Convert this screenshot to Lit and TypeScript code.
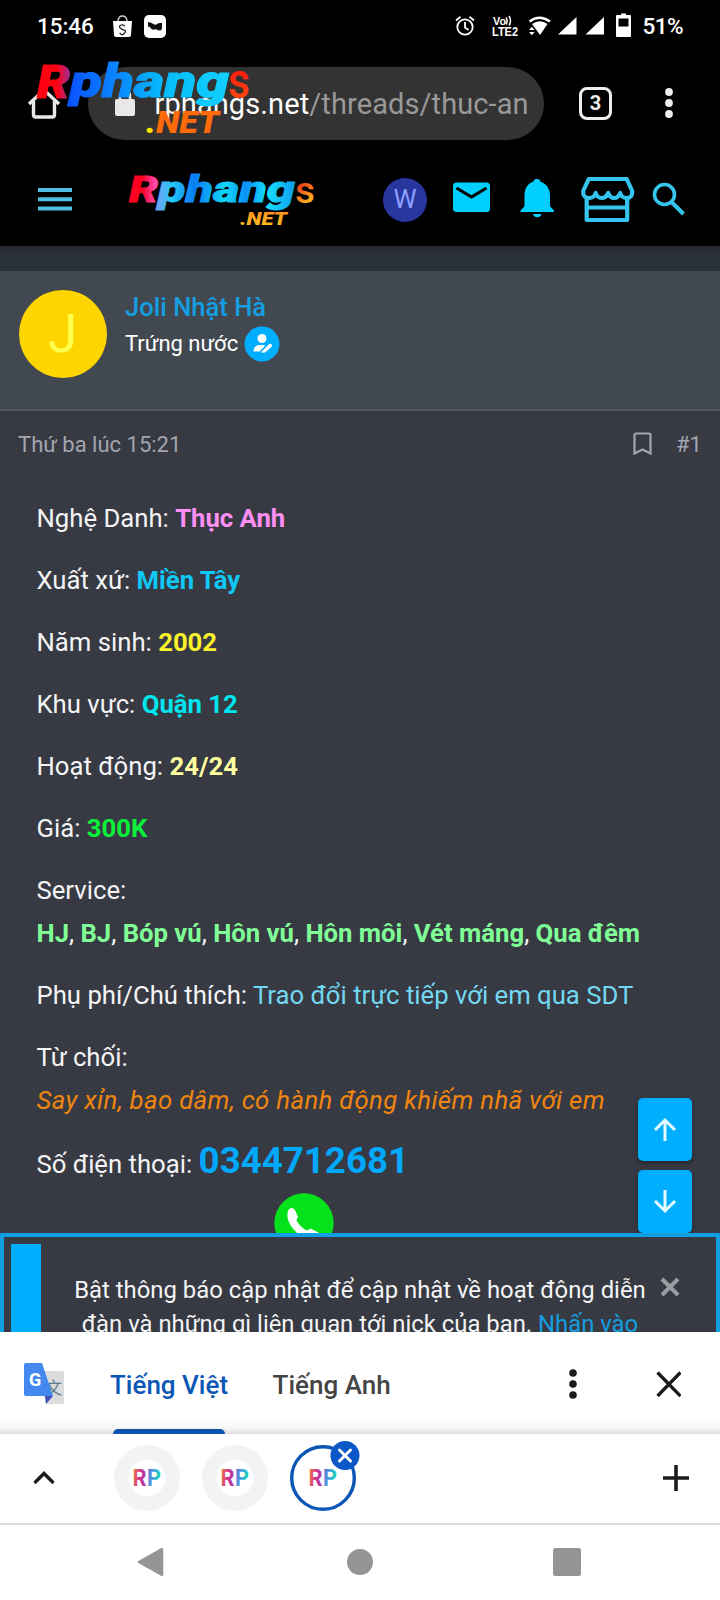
import { LitElement, html, css, svg } from "lit";
import { customElement, property } from "lit/decorators.js";

const fields = [
  { label: "Nghệ Danh:", value: "Thục Anh", tone: "pink" },
  { label: "Xuất xứ:", value: "Miền Tây", tone: "sky" },
  { label: "Năm sinh:", value: "2002", tone: "yellow" },
  { label: "Khu vực:", value: "Quận 12", tone: "cyan" },
  { label: "Hoạt động:", value: "24/24", tone: "cream" },
  { label: "Giá:", value: "300K", tone: "green" },
];
const services = ["HJ", "BJ", "Bóp vú", "Hôn vú", "Hôn môi", "Vét máng", "Qua đêm"];

@customElement("site-logo")
export class SiteLogo extends LitElement {
  @property() variant = "header";
  static styles = css`
    :host { display: block; }
    svg { display: block; overflow: visible; }
    .heavy { font: italic 900 47px Roboto, sans-serif; stroke-width: 1px; }
    .thin { font: 500 50px Roboto, sans-serif; }
    .net { font: italic 900 31px Roboto, sans-serif; }
    .heavy-s { font: italic 900 36px Roboto, sans-serif; stroke-width: 0.8px; }
    .thin-s { font: 500 37px Roboto, sans-serif; }
    .net-s { font: italic 900 17.5px Roboto, sans-serif; }
  `;
  render() {
    if (this.variant === "large") {
      return html`<svg width="216" height="76" viewBox="36 60 216 76">
        <defs>
          <linearGradient id="r"><stop offset=".6" stop-color="#ff0010" /><stop offset="1" stop-color="#9c2f9c" /></linearGradient>
          <linearGradient id="p"><stop offset="0" stop-color="#0a50ff" /><stop offset=".3" stop-color="#0a86ff" /><stop offset=".6" stop-color="#06bdfa" /><stop offset="1" stop-color="#12d0ff" /></linearGradient>
          <linearGradient id="s" x2="0" y2="1"><stop offset="0.3" stop-color="#ff1a10" /><stop offset="1" stop-color="#ff5a10" /></linearGradient>
        </defs>
        <text class="heavy" x="37" y="97.500" textLength="33" lengthAdjust="spacingAndGlyphs" fill="url(#r)" stroke="url(#r)">R</text>
        <text class="heavy" x="70" y="97" textLength="159" lengthAdjust="spacingAndGlyphs" fill="url(#p)" stroke="url(#p)">phang</text>
        <text class="thin" x="228" y="98" textLength="22" lengthAdjust="spacingAndGlyphs" fill="url(#s)">s</text>
        <text class="net" x="146" y="133" textLength="73" lengthAdjust="spacingAndGlyphs" fill="#ff6a0a"><tspan fill="#ffe600">.</tspan>NET</text>
      </svg>`;
    }
    return html`<svg width="188" height="54" viewBox="128 173 188 54">
      <defs>
        <linearGradient id="r"><stop offset=".45" stop-color="#ff0020" /><stop offset="1" stop-color="#ff5ad0" /></linearGradient>
        <linearGradient id="p"><stop offset="0" stop-color="#7a9cf0" /><stop offset=".12" stop-color="#25c8f8" /><stop offset=".28" stop-color="#0a7cf5" /><stop offset=".5" stop-color="#10d8f8" /><stop offset=".65" stop-color="#0a90fa" /><stop offset=".8" stop-color="#14e0fa" /><stop offset="1" stop-color="#109cf0" /></linearGradient>
        <linearGradient id="s" x2="0.4" y2="1"><stop offset="0.35" stop-color="#f03018" /><stop offset=".9" stop-color="#ffb020" /></linearGradient>
        <linearGradient id="n" x2="0" y2="1"><stop offset="0" stop-color="#ff8a18" /><stop offset="1" stop-color="#ffc628" /></linearGradient>
      </defs>
      <text class="heavy-s" x="129" y="202" textLength="29" lengthAdjust="spacingAndGlyphs" fill="url(#r)" stroke="url(#r)">R</text>
      <text class="heavy-s" x="158" y="201.500" textLength="137" lengthAdjust="spacingAndGlyphs" fill="url(#p)" stroke="url(#p)">phang</text>
      <text class="thin-s" x="295" y="202.500" textLength="20" lengthAdjust="spacingAndGlyphs" fill="url(#s)">s</text>
      <text class="net-s" x="240" y="225" textLength="47" lengthAdjust="spacingAndGlyphs" fill="url(#n)">.NET</text>
    </svg>`;
  }
}

@customElement("tab-chip")
export class TabChip extends LitElement {
  @property({ type: Boolean }) active = false;
  static styles = css`
    :host { display: block; width: 66px; height: 66px; }
    svg { display: block; overflow: visible; }
    .rp { font: 700 23.5px Roboto, sans-serif; }
  `;
  render() {
    return html`<svg width="66" height="66" viewBox="0 0 66 66">
      <defs>
        <linearGradient id="a" y2=".3"><stop offset=".1" stop-color="#f08048" /><stop offset=".6" stop-color="#d43090" /><stop offset="1" stop-color="#a838a8" /></linearGradient>
        <linearGradient id="b" y2=".3"><stop offset=".1" stop-color="#6a6ad8" /><stop offset=".5" stop-color="#4aa0e0" /><stop offset="1" stop-color="#10d8b0" /></linearGradient>
      </defs>
      ${this.active
        ? svg`<circle cx="33" cy="33" r="31.300" fill="#fff" stroke="#0b57b5" stroke-width="3.400" />`
        : svg`<circle cx="33" cy="33" r="33" fill="#f1f3f5" /><circle cx="33" cy="33" r="18.500" fill="#fff" />`}
      <text class="rp" x="18.500" y="41" textLength="14" lengthAdjust="spacingAndGlyphs" fill="url(#a)">R</text>
      <text class="rp" x="33" y="41" textLength="14" lengthAdjust="spacingAndGlyphs" fill="url(#b)">P</text>
      ${this.active
        ? svg`<circle cx="55" cy="10.500" r="14.500" fill="#0b57c8" /><path d="M49.500 5l11 11M60.500 5l-11 11" stroke="#fff" stroke-width="3" stroke-linecap="round" />`
        : null}
    </svg>`;
  }
}

@customElement("app-root")
export class AppRoot extends LitElement {
  static styles = css`
    :host { display: block; width: 720px; height: 1600px; overflow: hidden; position: relative; background: #000; color: #f4f4f6; font-family: Roboto, "Noto Sans", sans-serif; }
    * { box-sizing: border-box; }
    svg { display: block; flex: none; }
    .row { display: flex; align-items: center; white-space: nowrap; }
    .push { margin-left: auto; }

    .status { height: 52px; padding: 0 37px 0 37px; font-size: 22.400px; font-weight: 500; color: #fff; }
    .time { width: 76px; }
    .icons-left { gap: 12px; }

    .chrome { height: 102px; padding: 0 47px 0 27px; }
    .url { width: 456px; height: 73px; margin-left: 27px; border-radius: 37px; background: #333; padding-left: 27px; font-size: 29px; color: #fff; }
    .url .text { margin: 2px 0 0 19.5px; letter-spacing: 0.1px; }
    .url .path { color: #999; }
    .count { width: 33px; height: 33px; border: 3.5px solid #eee; border-radius: 8px; display: grid; place-items: center; font-size: 20px; font-weight: 700; color: #eee; margin-left: 35px; }
    .overlay-logo { position: absolute; left: 36px; top: 60px; z-index: 2; }

    .site { height: 92px; padding: 0 34px 0 38px; }
    .site-logo { margin: 0 0 0 56px; }
    .w { width: 44px; height: 44px; border-radius: 50%; background: #28379d; color: #8c9eff; display: grid; place-items: center; font-size: 26px; margin: 0 26px 0 67px; padding-bottom: 2px; }

    .gap { height: 25px; background: linear-gradient(#24272f, #2c323c 35%, #2c323c); }
    .user { height: 140px; background: #41484f; border-bottom: 2px solid #50545e; padding: 19px 18.5px; display: flex; align-items: flex-start; }
    .avatar { width: 88px; height: 88px; border-radius: 50%; background: #ffd500; color: #ffff4d; display: grid; place-items: center; font-size: 53px; }
    .who { margin-left: 18.5px; }
    .name { font-size: 25.600px; line-height: 35px; font-weight: 500; color: #159ee2; }
    .title { font-size: 22px; height: 36px; color: #fff; margin-top: 0.5px; }
    .title svg { margin-left: 5.5px; }

    .post { height: 822px; background: #373a43; overflow: hidden; position: relative; }
    .meta { height: 66px; padding: 0 18px; font-size: 22px; color: #a3a5af; }
    .meta svg { margin-right: 24px; }
    .body { padding: 19.5px 37px 0 36.5px; font-size: 25.700px; line-height: 43px; white-space: nowrap; }
    .body p { margin: 0 0 19px; }
    .body b, .body i { font-weight: 700; }
    .body i { font-weight: 400; color: #f0860f; letter-spacing: 0.37px; }
    .pink { color: #ff8ff5; }
    .sky { color: #10c8f5; }
    .yellow { color: #fbf22b; }
    .cyan { color: #00e5ee; }
    .cream { color: #ffffa0; }
    .green { color: #0cf03c; }
    .mint { color: #80ff96; }
    .pale { color: #72d8f2; }
    .body .phone { font-size: 36.700px; color: #00a8fc; }
    .body .last { height: 43px; margin: -2px 0 10px; }
    .call { margin-left: 236px; }
    .jump { position: absolute; right: 28.5px; top: 687px; display: grid; gap: 9px; }
    .jump div { width: 54px; height: 63px; border-radius: 5px; background: #00aeff; display: grid; place-items: center; box-shadow: 0 2px 4px rgba(0, 0, 0, 0.4); }

    .notice { height: 99px; overflow: hidden; background: #373a43; border: solid #0f9fe2; border-width: 4px 4px 0; padding: 7px 0 0 7px; display: flex; align-items: flex-start; }
    .bar { width: 30px; height: 99px; background: #00aeff; }
    .notice p { margin: 30px 0 0 33px; width: 572px; text-align: center; font-size: 23.850px; line-height: 33.500px; white-space: nowrap; }
    .notice a { color: #159ee2; }
    .notice svg { margin: 33px 0 0 13.5px; }

    .translate { height: 102px; background: linear-gradient(#fff 88px, #f8f8f8 95px, #dedede); position: relative; padding: 1px 39px 0 23px; font-size: 26px; font-weight: 500; color: #444; }
    .lang { margin: 2px 0 0 45px; }
    .lang + .lang { margin-left: 44.5px; }
    .lang.on { color: #0b57b5; }
    .under { position: absolute; left: 113px; bottom: 0; width: 112px; height: 5px; border-radius: 5px 5px 0 0; background: #0b52ae; }
    .gtext { font: 700 18px Roboto, sans-serif; }
    .wen { font: 400 17px "Noto Sans CJK SC", sans-serif; }

    .tabs { height: 91px; background: #fff; border-bottom: 2px solid #dcdcdc; padding: 0 31px 1px 33px; }
    .chips { display: flex; gap: 22px; margin-left: 58.5px; }
    .nav { height: 75px; background: #fff; padding: 0 0 2px 137px; }
    .nav svg + svg { margin-left: 183px; }
    .nav svg + svg + svg { margin-left: 180px; }
  `;

  render() {
    return html`
      <header class="row status">
        <span class="time">15:46</span>
        <div class="row icons-left">
          <svg width="19" height="22" viewBox="0 0 19 22"><path d="M0 6h19l-1 14q0 2-2 2H3q-2 0-2-2z" fill="#fff" /><path d="M5 6q.5-5 4.500-5T14 6" fill="none" stroke="#ccc" stroke-width="1.500" /><path d="M12 11q-2.500-2-4.500-.7t0 3 4 1.900-.2 3.200-4.600-.6" fill="none" stroke="#222" stroke-width="1.300" /></svg>
          <svg width="22" height="23" viewBox="0 0 22 23"><rect width="22" height="23" rx="5" fill="#fff" /><path d="M4 7q3.500.5 5.500 2t3.500 0 5-1v4.500q0 3-2 3t-3-.8-3-.2-3.500-1.500T4 12z" fill="#111" /></svg>
        </div>
        <svg class="push" width="228" height="30" viewBox="455 11 228 30" fill="#fff">
          <circle cx="465" cy="27" r="7.700" fill="none" stroke="#fff" stroke-width="1.800" /><path d="M465 22v5.500l3.500 2.500M456 20.500l4.500-3.700M474 20.500l-4.500-3.700" fill="none" stroke="#fff" stroke-width="1.800" />
          <g font-family="Liberation Sans, sans-serif" font-weight="700"><text x="493" y="25" font-size="11.500" textLength="13" lengthAdjust="spacingAndGlyphs">Vo</text><text x="492" y="35.500" font-size="12" textLength="26" lengthAdjust="spacingAndGlyphs">LTE2</text></g>
          <path d="M506 17.500q2.200 3.500 0 7M509 16q3 5 0 9.500" fill="none" stroke="#fff" stroke-width="1.500" />
          <path d="M529.500 21.500q10-7.500 20.500 0" fill="none" stroke="#fff" stroke-width="2.300" /><path d="M532 24q8-5.500 15.500 0L540 35z" /><path d="M529 30l2.800-3.200 2.800 3.200zM529 32l2.800 3.200 2.800-3.200z" />
          <path d="M558 34.500h18.500V17zM585.500 34.500H604V17z" />
          <path d="M621 13.500h5V15h4q1 0 1 1v20q0 1-1 1h-13q-1 0-1-1V16q0-1 1-1h4z" /><path d="M618.500 18.500h10v8h-10z" fill="#000" />
          <text x="642.500" y="34" font-family="Roboto, sans-serif" font-size="22.500" font-weight="500" textLength="41">51%</text>
        </svg>
      </header>

      <div class="row chrome">
        <svg width="34" height="32" viewBox="0 0 34 32"><path d="M2 17L17 3l15 14M6.500 14v13.500q0 2.500 2.500 2.500h16q2.500 0 2.500-2.500V14" fill="none" stroke="#e8e8e8" stroke-width="3.400" /></svg>
        <div class="row url">
          <svg width="20" height="28" viewBox="0 0 20 28"><rect y="10" width="20" height="17" rx="2" fill="#e8e8e8" /><path d="M5 11V7q0-5 5-5t5 5v4" fill="none" stroke="#e8e8e8" stroke-width="2.500" /></svg>
          <span class="text">rphangs.net<span class="path">/threads/thuc-an</span></span>
        </div>
        <div class="count">3</div>
        <svg class="push" width="8" height="32" viewBox="0 0 8 32" fill="#eee"><circle cx="4" cy="5" r="3.900" /><circle cx="4" cy="16" r="3.900" /><circle cx="4" cy="27" r="3.900" /></svg>
      </div>
      <site-logo class="overlay-logo" variant="large"></site-logo>

      <nav class="row site">
        <svg width="34" height="24" viewBox="0 0 34 24" fill="#4fbce2"><path d="M0 0h34v4H0zM0 9.300h34v4H0zM0 18.600h34v4H0z" /></svg>
        <site-logo class="site-logo"></site-logo>
        <div class="w">W</div>
        <svg width="233" height="48" viewBox="453 176 233 48" class="push" fill="#00cfff">
          <rect x="453" y="182.500" width="37" height="29.500" rx="3.500" /><path d="M456.500 188l15 9 15-9" fill="none" stroke="#000" stroke-width="3.200" />
          <path d="M537 179c3 0 3.300 2 3.500 2.700 6 1.800 9.500 7 9.500 14v10.500l4 4.300v1.500h-33.500v-1.500l4-4.300V195.500c0-7 3-12 9-14 .2-.7.500-2.500 3.500-2.500zM533 214h8.500q-1 3.200-4.200 3.200t-4.300-3.200z" />
          <g transform="translate(-1.300 0)" fill="none" stroke="#35c4ee" stroke-width="4.200" stroke-linejoin="round"><path d="M590 179h38l5.500 12q.5 7-5.500 7-5 0-6.500-5-2 5-6 5t-6-5q-2 5-6.500 5t-6-5q-1.500 5-6.500 5-6.500 0-6-7z" /><path d="M588 198v22h40.500v-22M588 207.500h40" /></g>
          <g fill="none" stroke="#35c4ee" stroke-width="3.600"><circle cx="664.500" cy="194.500" r="10" /><path d="M671.500 202l12 12" stroke-width="4" /></g>
        </svg>
      </nav>

      <div class="gap"></div>
      <section class="user">
        <div class="avatar">J</div>
        <div class="who">
          <div class="name">Joli Nhật Hà</div>
          <div class="row title">Trứng nước
            <svg width="36" height="36" viewBox="0 0 36 36"><circle cx="18" cy="18" r="17.500" fill="#00aeff" /><g fill="#fff"><circle cx="18" cy="12.500" r="4.500" /><path d="M9.500 25.500c0-4 2.500-6.500 6-6.500h4l1.800.7-5.800 5.800zM17.500 25.800l7.500-7.500q1.500-1 2.600.2 1 1.200 0 2.300L21 26.500l-3.500.3z" /></g></svg>
          </div>
        </div>
      </section>

      <article class="post">
        <div class="row meta">
          <span>Thứ ba lúc 15:21</span>
          <svg class="push" width="19" height="24" viewBox="0 0 19 24"><path d="M1.500 21.500V3q0-1.500 1.500-1.500h13q1.500 0 1.500 1.500v18.500l-8-4z" fill="none" stroke="#a3a5af" stroke-width="2.200" /></svg>
          <span>#1</span>
        </div>
        <div class="body">
          ${fields.map((f) => html`<p>${f.label} <b class=${f.tone}>${f.value}</b></p>`)}
          <p>Service:<br />${services.map((s, i) => html`${i ? ", " : ""}<b class="mint">${s}</b>`)}</p>
          <p>Phụ phí/Chú thích: <span class="pale">Trao đổi trực tiếp với em qua SDT</span></p>
          <p>Từ chối:<br /><i>Say xỉn, bạo dâm, có hành động khiếm nhã với em</i></p>
          <p class="last">Số điện thoại: <b class="phone">0344712681</b></p>
          <svg class="call" width="62" height="62" viewBox="0 0 62 62"><circle cx="31" cy="31" r="29.700" fill="#05e21c" /><path d="M16 17q4-3 6.500 2l2.500 6q-2 3-1 4.500 3 5 8.500 8.500 2 1 5-1.500l7 3.500q4 3 0 7-7 5-17-3-12-10-13-19-.5-6 1.500-8z" fill="#fff" /></svg>
        </div>
        <div class="jump">
          <div><svg width="24" height="26" viewBox="0 0 24 26"><path d="M12 24V3M2 13L12 3l10 10" fill="none" stroke="#e6fbff" stroke-width="3" /></svg></div>
          <div><svg width="24" height="26" viewBox="0 0 24 26"><path d="M12 1v21M2 12l10 10 10-10" fill="none" stroke="#e6fbff" stroke-width="3" /></svg></div>
        </div>
      </article>

      <aside class="notice">
        <div class="bar"></div>
        <p>Bật thông báo cập nhật để cập nhật về hoạt động diễn<br />đàn và những gì liên quan tới nick của bạn. <a>Nhấn vào</a></p>
        <svg width="20" height="20" viewBox="0 0 20 20"><path d="M2 2l16 16M18 2L2 18" stroke="#9b9da3" stroke-width="4" /></svg>
      </aside>

      <div class="row translate">
        <svg width="42" height="42" viewBox="0 0 42 42"><path d="M16 8h23q2 0 2 2v29q0 2-2 2H23z" fill="#dcdcdc" /><text class="wen" x="22" y="31" fill="#607d8b">文</text><path d="M22 33h8l-7 8z" fill="#3f51b5" /><path d="M3 0h16l11 33H3q-2 0-2-2V2q0-2 2-2z" fill="#4489f0" /><text class="gtext" x="6" y="23" fill="#fff">G</text></svg>
        <span class="lang on">Tiếng Việt</span>
        <span class="lang">Tiếng Anh</span>
        <svg class="push" width="112" height="32" viewBox="569 1367 112 32" fill="#1b1b1b"><circle cx="573" cy="1372" r="3.800" /><circle cx="573" cy="1383" r="3.800" /><circle cx="573" cy="1394" r="3.800" /><path d="M657.500 1371.500l23 23.500M680.500 1371.500l-23 23.500" stroke="#1b1b1b" stroke-width="3.300" /></svg>
        <div class="under"></div>
      </div>

      <div class="row tabs">
        <svg width="22" height="14" viewBox="0 0 22 14"><path d="M1.500 12L11 2.500l9.500 9.500" fill="none" stroke="#1b1b1b" stroke-width="3.400" /></svg>
        <div class="chips"><tab-chip></tab-chip><tab-chip></tab-chip><tab-chip active></tab-chip></div>
        <svg class="push" width="26" height="26" viewBox="0 0 26 26"><path d="M13 0v26M0 13h26" stroke="#1b1b1b" stroke-width="3.600" /></svg>
      </div>

      <footer class="row nav">
        <svg width="27" height="30" viewBox="0 0 27 30"><path d="M2 15L25 2v26z" fill="#959595" stroke="#959595" stroke-width="2.500" stroke-linejoin="round" /></svg>
        <svg width="26" height="26" viewBox="0 0 26 26"><circle cx="13" cy="13" r="13" fill="#959595" /></svg>
        <svg width="28" height="28" viewBox="0 0 28 28"><rect width="28" height="28" rx="2.500" fill="#959595" /></svg>
      </footer>
    `;
  }
}
